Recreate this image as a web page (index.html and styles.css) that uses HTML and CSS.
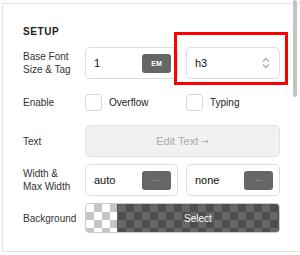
FILE: index.html
```html
<!DOCTYPE html>
<html>
<head>
<meta charset="utf-8">
<link rel="stylesheet" href="styles.css">
</head>
<body>
<div class="frame">
  <div class="panel">
    <h2 class="heading">SETUP</h2>
    <div class="grid">
      <div class="label">Base Font<br>Size &amp; Tag</div>
      <div class="field">
        <span class="value">1</span>
        <span class="unit">EM</span>
      </div>
      <div class="field">
        <span class="value">h3</span>
        <svg class="updown" width="8" height="12" viewBox="0 0 8 12"><path d="M1 4.5 L4 1.5 L7 4.5 M1 7.5 L4 10.5 L7 7.5" fill="none" stroke="#a8a8a8" stroke-width="1.3"/></svg>
      </div>

      <div class="label">Enable</div>
      <label class="check"><span class="box"></span><span>Overflow</span></label>
      <label class="check"><span class="box"></span><span>Typing</span></label>

      <div class="label">Text</div>
      <div class="wide edit">Edit Text <span class="arrow">&#8594;</span></div>

      <div class="label">Width &amp;<br>Max Width</div>
      <div class="field">
        <span class="value">auto</span>
        <span class="more">&middot;&middot;&middot;</span>
      </div>
      <div class="field">
        <span class="value">none</span>
        <span class="more">&middot;&middot;&middot;</span>
      </div>

      <div class="label">Background</div>
      <div class="wide bg">
        <span class="swatch"></span>
        <span class="select">Select</span>
      </div>
    </div>
  </div>
  <div class="scrollbar"></div>
  <div class="highlight"></div>
</div>
</body>
</html>
```
FILE: styles.css
```css
html, body {
  margin: 0;
  padding: 0;
  background: #fff;
  font-family: "Liberation Sans", Arial, sans-serif;
  color: #333;
}
.frame {
  position: relative;
  width: 300px;
  height: 255px;
  padding: 3px 0 0 2px;
  box-sizing: border-box;
  overflow: hidden;
}
.panel {
  border-top: 1px solid #e4e4e4;
  border-left: 1px solid #e4e4e4;
  border-bottom: 1px solid #e4e4e4;
  height: 249px;
  box-sizing: border-box;
  padding: 22px 0 0 20px;
}
.heading {
  margin: 0;
  font-size: 10px;
  line-height: 12px;
  font-weight: bold;
  letter-spacing: 0.6px;
  color: #222;
}
.grid {
  margin-top: 9px;
  display: grid;
  grid-template-columns: 54px 93px 94px;
  grid-template-rows: 32px 32px 32px 32px 30px;
  column-gap: 8px;
  row-gap: 7px;
}
.label {
  font-size: 10px;
  line-height: 13px;
  color: #333;
  align-self: center;
  white-space: nowrap;
}
.field {
  border: 1px solid #dcdcdc;
  border-radius: 5px;
  display: flex;
  align-items: center;
  justify-content: space-between;
  padding: 0 6px 0 8px;
}
.value {
  font-size: 11px;
  color: #111;
}
.unit {
  background: #666;
  color: #fff;
  font-size: 7px;
  font-weight: bold;
  width: 29px;
  height: 19px;
  border-radius: 3px;
  display: flex;
  align-items: center;
  justify-content: center;
}
.more {
  background: #666;
  color: #bbb;
  font-size: 8px;
  width: 29px;
  height: 19px;
  border-radius: 3px;
  display: flex;
  align-items: center;
  justify-content: center;
  letter-spacing: -0.5px;
}
.updown {
  margin-right: 3px;
}
.check {
  display: flex;
  align-items: center;
  gap: 7px;
  font-size: 10px;
  color: #222;
}
.box {
  width: 15px;
  height: 15px;
  border: 1px solid #d6d6d6;
  border-radius: 4px;
}
.wide {
  grid-column: 2 / 4;
}
.edit {
  background: #f1f1f1;
  border: 1px solid #e2e2e2;
  border-radius: 5px;
  color: #aaa;
  font-size: 11px;
  display: flex;
  align-items: center;
  justify-content: center;
  gap: 3px;
}
.arrow {
  font-family: "DejaVu Sans", sans-serif;
  font-size: 9px;
}
.bg {
  border-radius: 4px;
  overflow: hidden;
  display: flex;
  border: 1px solid #ccc;
  background-color: #fff;
  background-image:
    linear-gradient(45deg, #c4c4c4 25%, transparent 25%, transparent 75%, #c4c4c4 75%),
    linear-gradient(45deg, #c4c4c4 25%, transparent 25%, transparent 75%, #c4c4c4 75%);
  background-size: 16px 16px;
  background-position: 0 0, 8px 8px;
}
.swatch {
  width: 31px;
}
.select {
  flex: 1;
  background: rgba(0, 0, 0, 0.6);
  color: #fff;
  font-size: 10px;
  display: flex;
  align-items: center;
  justify-content: center;
}
.scrollbar {
  position: absolute;
  left: 293px;
  top: 0;
  width: 4px;
  height: 97px;
  border-radius: 2px;
  background: #c3c3c3;
}
.highlight {
  position: absolute;
  left: 174px;
  top: 32px;
  width: 114px;
  height: 53px;
  border: 3px solid #f00;
  box-sizing: border-box;
}
```
